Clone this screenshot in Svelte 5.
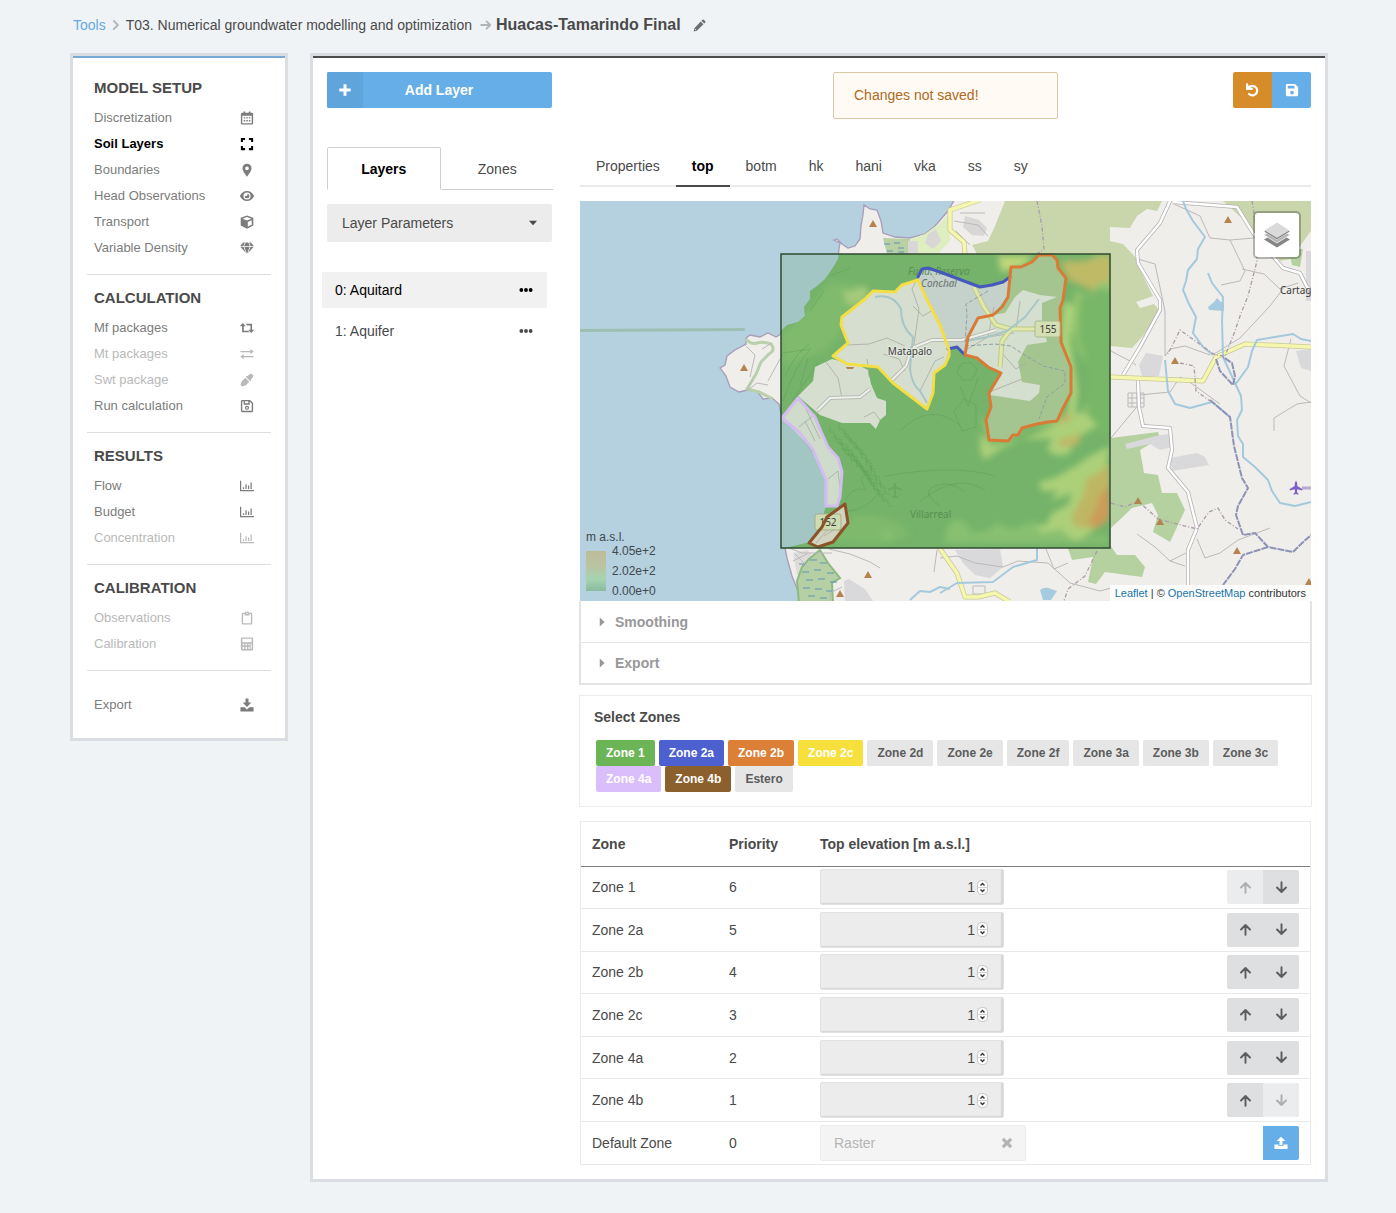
<script>
	const sections = [
		{
			title: 'MODEL SETUP',
			items: [
				{ label: 'Discretization', icon: 'calendar' },
				{ label: 'Soil Layers', icon: 'expand', active: true },
				{ label: 'Boundaries', icon: 'marker' },
				{ label: 'Head Observations', icon: 'eye' },
				{ label: 'Transport', icon: 'cube' },
				{ label: 'Variable Density', icon: 'gem' }
			]
		},
		{
			title: 'CALCULATION',
			items: [
				{ label: 'Mf packages', icon: 'retweet' },
				{ label: 'Mt packages', icon: 'exchange', disabled: true },
				{ label: 'Swt package', icon: 'dropper', disabled: true },
				{ label: 'Run calculation', icon: 'saveOutline' }
			]
		},
		{
			title: 'RESULTS',
			items: [
				{ label: 'Flow', icon: 'chart' },
				{ label: 'Budget', icon: 'chart' },
				{ label: 'Concentration', icon: 'chart', disabled: true }
			]
		},
		{
			title: 'CALIBRATION',
			items: [
				{ label: 'Observations', icon: 'clipboard', disabled: true },
				{ label: 'Calibration', icon: 'calculator', disabled: true }
			]
		},
		{ title: null, items: [{ label: 'Export', icon: 'download' }] }
	];

	const parameters = ['Properties', 'top', 'botm', 'hk', 'hani', 'vka', 'ss', 'sy'];
	const layers = ['0: Aquitard', '1: Aquifer'];

	const zones = [
		{ name: 'Zone 1', color: '#6cb557' },
		{ name: 'Zone 2a', color: '#4d60d0' },
		{ name: 'Zone 2b', color: '#dc8038' },
		{ name: 'Zone 2c', color: '#f7e03c' },
		{ name: 'Zone 2d' },
		{ name: 'Zone 2e' },
		{ name: 'Zone 2f' },
		{ name: 'Zone 3a' },
		{ name: 'Zone 3b' },
		{ name: 'Zone 3c' },
		{ name: 'Zone 4a', color: '#dabdfb' },
		{ name: 'Zone 4b', color: '#8b602c' },
		{ name: 'Estero' }
	];

	let rows = $state([
		{ zone: 'Zone 1', value: 1 },
		{ zone: 'Zone 2a', value: 1 },
		{ zone: 'Zone 2b', value: 1 },
		{ zone: 'Zone 2c', value: 1 },
		{ zone: 'Zone 4a', value: 1 },
		{ zone: 'Zone 4b', value: 1 }
	]);

	let activeParameter = $state('top');
	let activeLayer = $state(0);

	const move = (index, step) => {
		const next = [...rows];
		[next[index], next[index + step]] = [next[index + step], next[index]];
		rows = next;
	};

	// filled shapes, 16x16 grid
	const solid = {
		calendar: 'M4 .5h2V2h4V.5h2V2h1.500q1.500 0 1.500 1.500V14q0 1.500-1.500 1.500h-11Q1 15.500 1 14V3.500Q1 2 2.500 2H4zM2.600 5.500V14h10.800V5.500zM4.300 7H6v1.700H4.300zM7.200 7h1.700v1.700H7.200zM10.100 7h1.700v1.700h-1.700zM4.300 10.300H6V12H4.300zM7.200 10.300h1.700V12H7.200zM10.100 10.300h1.700V12h-1.700z',
		expand: 'M1 1h4.800v2.300H3.300v2.500H1zM10.200 1H15v4.800h-2.300V3.300h-2.500zM1 10.200h2.300v2.500h2.500V15H1zM12.700 10.200H15V15h-4.800v-2.300h2.500z',
		marker: 'M8 .8a5.2 5.2 0 0 1 5.2 5.2C13.2 9.200 8 15.600 8 15.600S2.800 9.200 2.800 6A5.200 5.200 0 0 1 8 .8zM8 4a2.100 2.100 0 1 0 0 4.200A2.100 2.100 0 0 0 8 4z',
		eye: 'M8 2.400c3.600 0 6.400 2.100 8.100 5.600-1.700 3.500-4.500 5.600-8.100 5.600S1.600 11.500-.1 8C1.600 4.500 4.400 2.400 8 2.400zM8 3.900a4.100 4.100 0 1 0 0 8.200 4.100 4.100 0 0 0 0-8.200zM8.300 5.300a2.700 2.700 0 1 1-2.900 2.500q1.600.7 2.600-.2t.3-2.300z',
		cube: 'M8 .5l7.200 2.700v8.800L8 15.600.8 12V3.200zM2.900 4.200L8 6.200l5.100-2L8 2.400zM8.900 7.900v5.300l4.500-2.200V6.100z',
		gem: 'M3.600 1.800h2L3.900 5.700H.2zM6.500 1.800h3l1.700 3.900H4.800zM10.400 1.800h2l3.400 3.900h-3.700zM.3 6.600h3.600l2.900 7zM4.900 6.600h6.200L8 14.800zM12.100 6.600h3.600l-6.500 7z',
		retweet: 'M3.200 2.300L6.600 6H4.300v5h5l1.800 1.900H2.400V6H-.2zM6.500 3h7.300v7h2.400l-3.400 3.600L9.400 10h2.500V5H8.400z',
		exchange: 'M.5 4.500h11.300V2.200L15.700 5.200 11.800 8.200V6H.5zM15.500 11.700H4.200V14L.3 11l3.900-3v2.200h11.300z',
		dropper: 'M10.500 1.800q2-2 3.800-.1t-.1 3.800L12.300 7.500l.6.700-1.200 1.200-5.100-5.100L7.800 3.100l.7.600zM6.100 5.400l4.500 4.500-4 4q-.6.6-1.500.6L2.600 15.500.5 13.400l1-2.500q0-.9.6-1.500z',
		saveOutline: 'M2.500 1h9L15 4.500v9q0 1.500-1.500 1.500h-11Q1 15 1 13.500v-11Q1 1 2.500 1zM2.600 2.600v10.800h10.800V5.200l-2.300-2.300v3.600H4.200V2.600zM5.800 2.600v2.300h3.700V2.600zM8 7.600a2.400 2.400 0 1 1 0 4.800 2.400 2.400 0 0 1 0-4.800zM8 9a1 1 0 1 0 0 2 1 1 0 0 0 0-2z',
		chart: 'M0 2h1.400v10.600H16V14H0zM3.300 9.300h1.400v2H3.300zM6.200 6h1.400v5.300H6.200zM9.100 7.300h1.400v4H9.100zM12 4h1.400v7.300H12z',
		clipboard: 'M5.500 2Q6 .6 8 .6T10.500 2H12.700q1.300 0 1.300 1.300v10.900q0 1.300-1.300 1.300H3.300Q2 15.500 2 14.200V3.300Q2 2 3.300 2zM3.500 3.500V14h9V3.500h-1.700V5H5.200V3.500zM8 1.700a.8.800 0 1 0 0 1.600.8.800 0 0 0 0-1.600z',
		calculator: 'M2.500 .5h11Q15 .5 15 2v12q0 1.500-1.500 1.500h-11Q1 15.500 1 14V2Q1 .5 2.500 .5zM2.700 2.100v4h10.600v-4zM3 7.600v1.800h1.800V7.600zM6.300 7.600v1.800h1.800V7.600zM9.600 7.600v1.800H11V7.600zM12.200 7.600v6h1.100v-6zM3 11v2.600h1.800V11zM6.300 11v2.600h1.800V11zM9.600 11v2.600H11V11z',
		download: 'M6.300 .5h3.400v4.700h3.300L8 10.200 3 5.200h3.300zM.5 10.500h4.800L8 13.200l2.700-2.700h4.800v4.800H.5z',
		upload: 'M6.300 10.500V5.800H3L8 .8l5 5H9.700v4.700zM.5 9.800h4.600v1.700h5.800V9.800h4.600v5H.5z',
		plus: 'M6.300 1.500h3.400v4.800h4.800v3.400H9.700v4.800H6.300V9.700H1.500V6.300h4.800z',
		save: 'M2.500 1h8.800L15 4.700v8.800q0 1.500-1.500 1.500h-11Q1 15 1 13.500v-11Q1 1 2.500 1zM3.200 3.200v3h7.600v-3zM8 8.800a2.100 2.100 0 1 0 0 4.200 2.100 2.100 0 0 0 0-4.200z',
		pencil: 'M9.500 3.100l3.400 3.400-8.100 8.100-4 .9.900-4zM10.400 2.200l1.300-1.300q.8-.8 1.600 0l1.800 1.800q.8.8 0 1.600l-1.300 1.300zM2.900 12l-.5 1.900 1.900-.5z',
		dots: 'M2.700 5.800a2.200 2.200 0 1 1 0 4.400 2.200 2.200 0 0 1 0-4.400zM8 5.800a2.200 2.200 0 1 1 0 4.400 2.200 2.200 0 0 1 0-4.400zM13.300 5.800a2.200 2.200 0 1 1 0 4.400 2.200 2.200 0 0 1 0-4.400z',
		times: 'M1 4l3-3 4 4 4-4 3 3-4 4 4 4-3 3-4-4-4 4-3-3 4-4z',
		caret: 'M5 2l6.500 6L5 14z',
		caretDown: 'M1.500 4.500h13L8 11.500z'
	};

	// outlined shapes, 16x16 grid
	const line = {
		angle: 'M5 2.500L10.500 8 5 13.500',
		arrowRight: 'M1.500 8h12M8.800 3.200L13.600 8l-4.800 4.800',
		arrowUp: 'M8 14.500V2.500M2.500 8L8 2.500 13.500 8',
		arrowDown: 'M8 1.500v12M2.500 8L8 13.500 13.500 8',
		undo: 'M2.300 1.500v4.800h5M3 5.800Q4.800 3 8 3a5.100 5.100 0 1 1-3.700 8.700'
	};

	const peaks = [[293, 23], [164, 167], [288, 374], [260, 393], [648, 19], [595, 160], [558, 300], [580, 321], [657, 350], [729, 381]];
	const coast = 'M376 -4L368 10 355 25 345 33 330 37 315 36 303 32 301 20 297 9 290 8 284 4 283 14 281 25 280 38 275 45 268 47 262 43 257 38 254 39 260 42 259 48 258 58 252 68 245 78 237 85 230 90 230 98 224 106 225 115 218 121 207 124 201 130 201 133 196 136 188 132 180 136 170 134 166 137 166 143 155 149 147 155 145 164 140 167 146 175 150 186 159 191 168 189 177 190 183 198 192 197 199 203 202 217 218 232 235 255 245 280 246 305 240 325 230 341 205 347 207 357 212 375 218 390 220 404H735V-4z';
	const marsh = [[219, 363], [230, 359], [240, 362], [222, 371], [234, 369], [247, 372], [226, 379], [238, 378], [250, 381], [223, 387], [235, 388], [246, 390], [228, 395], [240, 397]];
	const terraces = [[250, 226], [256, 233], [262, 238], [268, 244], [273, 251], [277, 258], [282, 266], [287, 273]];
</script>

{#snippet icon(name, size = 14)}
	<svg class="icon" width={size} height={size} viewBox="0 0 16 16" aria-hidden="true">
		{#if solid[name]}
			<path d={solid[name]} fill="currentColor" fill-rule="evenodd" />
		{:else}
			<path d={line[name]} fill="none" stroke="currentColor" stroke-width="2.4" stroke-linecap="round" stroke-linejoin="round" />
		{/if}
	</svg>
{/snippet}

<div class="page">
	<nav class="breadcrumb" aria-label="Breadcrumb">
		<a href="#tools">Tools</a>
		<span class="breadcrumb__divider">{@render icon('angle', 12)}</span>
		<span>T03. Numerical groundwater modelling and optimization</span>
		<span class="breadcrumb__divider breadcrumb__divider--arrow">{@render icon('arrowRight', 12)}</span>
		<h1>Huacas-Tamarindo Final</h1>
		<button class="breadcrumb__edit" aria-label="Edit title">{@render icon('pencil', 13)}</button>
	</nav>

	<div class="columns">
		<aside class="box">
			<div class="sidebar">
				{#each sections as section}
					<section class="sidebar__section">
						{#if section.title}
							<h2>{section.title}</h2>
						{/if}
						{#each section.items as item}
							<a class="sidebar__item" class:active={item.active} class:disabled={item.disabled} href="#nav">
								<span>{item.label}</span>
								{@render icon(item.icon)}
							</a>
						{/each}
					</section>
				{/each}
			</div>
		</aside>

		<main class="box">
			<div class="editor">
				<div class="layers">
					<button class="add-button">
						<span class="add-button__icon">{@render icon('plus')}</span>
						<span class="add-button__label">Add Layer</span>
					</button>

					<div class="tabs">
						<button class="tabs__item active">Layers</button>
						<button class="tabs__item">Zones</button>
					</div>

					<div class="dropdown">
						<select aria-label="Layer parameters">
							<option>Layer Parameters</option>
						</select>
						{@render icon('caretDown', 10)}
					</div>

					<ul class="layer-list">
						{#each layers as layer, index}
							<li class:active={index === activeLayer}>
								<button class="layer-list__name" onclick={() => (activeLayer = index)}>{layer}</button>
								<button class="layer-list__menu" aria-label="Actions for {layer}">{@render icon('dots')}</button>
							</li>
						{/each}
					</ul>
				</div>

				<div class="content">
					<div class="toolbar">
						<div class="message" role="status">Changes not saved!</div>
						<div class="toolbar__buttons">
							<button class="undo" aria-label="Undo">{@render icon('undo', 15)}</button>
							<button class="save" aria-label="Save">{@render icon('save')}</button>
						</div>
					</div>

					<div class="menu">
						{#each parameters as parameter}
							<button class:active={parameter === activeParameter} onclick={() => (activeParameter = parameter)}>{parameter}</button>
						{/each}
					</div>

					<div class="map">
						<svg class="map__canvas" viewBox="0 0 731 400" preserveAspectRatio="xMidYMid slice" role="img" aria-label="Model area">
							<defs>
								<clipPath id="land"><path d={coast} /></clipPath>
								<clipPath id="raster"><rect x="201" y="53" width="329" height="294" /></clipPath>
								<filter id="soft" x="-30%" y="-30%" width="160%" height="160%"><feGaussianBlur stdDeviation="3" /></filter>
							</defs>
							<rect width="731" height="400" fill="#b5d0de" />
							<path d="M0 129.500L165 128.500" stroke="#9cbfb2" stroke-width="3" />
							<path d={coast} fill="#f0eeea" stroke="#a79db8" stroke-width="1.300" />

							<!-- vegetation and built-up areas -->
							<path d="M425 0L415 25 408 40 392 44 397 53H530V145L552 147 563 135 580 110 574 103 560 107 556 101 573 95 563 75 557 58 543 43 530 40V26L550 27 557 15 567 8 577 10 582 0z" fill="#c9d5ab" />
							<path d="M643 0L665 20 675 35 690 45 700 60 712 58 720 45 731 30V0z" fill="#c9d5ab" />
							<path d="M303 37L330 38 328 53H307z" fill="#b9cfa4" />
							<path d="M330 38L345 33 360 22 370 12V40L358 53H338z" fill="#dfeec0" />
							<path d="M328 40h10v13h-10zM348 33l8-5 5 12-8 8-8-6zM385 15l14 4 8 8-3 8-12-1-9-8z" fill="#d8d7d6" />
							<path d="M531 237L578 231 580 237 560 249 564 272 578 274 582 292 597 292 605 309 590 341 573 331 578 314 572 302 552 307 531 327z" fill="#b5d1a0" />
							<path d="M488 347L530 344 537 354 555 354 565 366 562 376 525 371 516 383 508 381 513 356 492 359zM709 48h14l-3 18-8-2z" fill="#b5d1a0" />
							<path d="M375 349L420 348 423 366 410 377 395 374 383 362zM545 243L580 234 590 233 593 246 580 249 570 243 547 248zM590 257L617 252 625 256 629 264 592 270zM566 152l17 3-4 20h-17l-3-11zM716 150l15-2v22l-10-3zM726 50h5v50h-5zM264 380l5-2 16 10 8 12h-28z" fill="#d9d8da" />
							<path d="M213 352L228 349 235 360 228 372 217 374z" fill="#dedbdb" />
							<path d="M240 349L248 362 260 377 252 382 253 402H219L217 380 222 366 229 358z" fill="#b6d0a5" stroke="#8dba80" stroke-width="2" />
							{#each marsh as [x, y]}
								<path d="M{x} {y}h7" stroke="#5f95b5" />
							{/each}
							<path d="M304 43h6M314 42h6M318 47h6M307 50h6M318 51h6" stroke="#5f95b5" />
							<path d="M166 138q5 6 11 4t14 1q5 6-2 10l-8 8-5 12-6 10-3 5 12 3 14 7" fill="none" stroke="#b9d0ac" stroke-width="3" />
							<path d="M628 106l6-5 3-4 4 4 3 1v8l-15-1zM460 389q5-4 11-1l6 2-6 9h-8z" fill="#a6cbe0" />

							<!-- small roads -->
							<g fill="none" stroke="#bcb9bb">
								<path d="M594 3L620 15 630 37 650 39 665 70 660 80 641 84M650 39L674 37M662 68L684 73 700 88 718 82M703 88L690 105 660 137 634 153M558 58L575 63 585 110 585 155 590 148 605 145 630 154" />
								<path d="M559 194L590 191 600 176 611 182 640 203M531 150L550 160 556 164M711 138L704 165 720 195 731 202M694 230V217L717 203 731 201M560 202L545 220 531 237" />
								<path d="M557 333L575 346 590 360 610 350M617 338L625 357 640 352 658 339 690 327M605 365L590 360M360 357L377 355 395 362 423 366 438 360 468 362 490 382 520 390 531 387" />
								<path d="M249 348L270 353 290 361 300 367M354 371l3-22M466 348l8 20 14-6M250 400v-8l12-6M204 345l18 7 30 0" />
								<path d="M166 145l9 9-5 22M182 148l10-6M173 178l-6 12 10-8 11 2M200 158l-12 22M374 20l24 4 10 11M380 12h25M376 30l14 14" />
								<path d="M548 192h16v14h-16zM552 192v14M557 192v14M548 197h16M548 202h16M393 385h12v8h-12zM215 353l14 14M213 360l14-7" />
							</g>

							<!-- main roads -->
							<g fill="none" stroke-linejoin="round">
								<path stroke="#b3b0b3" stroke-width="4" d="M591 -2L580 22 557 49 558 62 580 99 580 109 560 146 543 174M593 1L657 6 673 32 703 67 720 72 727 86 732 90M558 179L559 206 563 225 590 227 592 249 588 267 608 291 617 327 608 349 608 384" />
								<path stroke="#fff" stroke-width="2.500" d="M591 -2L580 22 557 49 558 62 580 99 580 109 560 146 543 174M593 1L657 6 673 32 703 67 720 72 727 86 732 90M558 179L559 206 563 225 590 227 592 249 588 267 608 291 617 327 608 349 608 384" />
								<path stroke="#c8c995" stroke-width="5" d="M531 176L623 180 636 156 665 143 732 146M358 345L377 372 385 396 398 396 415 392 430 401M400 -1L370 9 370 29 384 41 385 53" />
								<path stroke="#f6f7ae" stroke-width="3.500" d="M531 176L623 180 636 156 665 143 732 146M358 345L377 372 385 396 398 396 415 392 430 401M400 -1L370 9 370 29 384 41 385 53" />
							</g>

							<!-- rivers -->
							<g fill="none" stroke="#a4c9dd" stroke-width="2" stroke-linejoin="round">
								<path d="M603 0L606 8 613 20 625 36 618 48 617 58 608 69 606 80 603 89 609 103 616 116 613 132 623 146 633 154M628 72L632 82 643 96 642 120 643 156 655 182 661 195 662 209 657 219 658 235 663 243 663 256 675 266 688 279 692 290 700 302 715 305 731 301" />
								<path d="M655 184L668 166 672 150 677 139 695 136 713 133 721 138 731 140M585 159L588 190 595 203 610 207 632 201 650 216M360 392L377 382 413 381 433 366 457 359 457 347M330 399L340 390 350 391 360 386 370 388" />
							</g>
							<path d="M636 158L640 170 653 184 655 175 652 162 643 156M630 199L650 216 654 245 662 277 668 287 658 305 656 314 663 334 675 332 688 346 713 351 720 344 731 334M688 346L663 354 655 368 643 384" fill="none" stroke="#8d93b5" stroke-width="2" stroke-dasharray="7 1" />
							<path d="M672 0L677 30 677 60 668 95 660 115 655 130 645 155 635 154 600 129 588 153M600 162L614 165 616 190 630 200M531 302L545 306 558 300 578 318 617 328 629 311 638 307 645 319 658 328M517 350L505 375 488 388 484 400M457 0L462 25 464 48 457 53" fill="none" stroke="#ab9aac" stroke-width="1.300" stroke-dasharray="4 2 1 2" />

							<!-- elevation raster -->
							<g clip-path="url(#raster)">
								<rect x="201" y="53" width="329" height="294" fill="#a2c6c4" />
								<g clip-path="url(#land)">
									<rect x="201" y="53" width="329" height="294" fill="#74b369" />
									<g filter="url(#soft)">
										<path d="M235 100L250 80 280 85 292 95 270 110 262 130 245 150 205 165 201 135z" fill="#80ba6d" />
										<path d="M262 90h14v-4h12v8l-8 10h-12z" fill="#a5ca79" />
										<path d="M415 53h120v38l-14-3-14 6-12-4-5 30 8 30 12 20-2 30-14 22-40 5-30 12-25-25 10 25 35-10 45-15-10 35 35-50V53H415l15 15z" fill="#95c570" />
										<path d="M500 96l32-6v145l-26-10 4-50-12-40z" fill="#78b767" />
										<path d="M480 60h22l30-7v26l-14 3-4 8-14-6-12-6z" fill="#bfba66" />
										<path d="M418 55h35l-10 10-22 6z" fill="#bfd67c" />
										<path d="M484 100l9 5-3 35 8 50-4 30-8 5 4-35-10-45z" fill="#afd47b" />
										<path d="M400 232l12 12 30-5 30-13 15-15 20 2 10 12-20 12-8 16-12 2-10-6 5-12-30 2-20 8-18 12-4-10z" fill="#abd079" />
										<path d="M477 240l25-8-4 12-18 2zM482 214l12-2-6 10-10 0z" fill="#c0b666" />
										<path d="M530 245l-20 10-16 11-18 10-18 6 4 8 16 0-8 10 22-8-4 12-16 8-6 12-22 0 5 8 35 0 12 10 21-15z" fill="#abd079" />
										<path d="M530 262l-12 10-12 6-2 14-12 22 2 12 22 2 14-12z" fill="#bfb663" />
										<path d="M530 284l-10 10-4 14-8 16 12 2 10-10z" fill="#cb9b59" />
										<path d="M255 325q20-15 42-10l22 6 12 14-30 8-45-2z" fill="#7fb96c" />
										<path d="M302 330h11v9h-11zM365 332l8-14 14 4 4 10 16-2 10-8 16 6 20-8 8 12 20-4 10 12 36-6v8H365z" fill="#88c071" />
									</g>
									<g fill="none" stroke="#5c9f57" stroke-opacity=".45">
										<path d="M203 200q12-35 26-50M205 175q10-22 24-32M212 200l26-38M220 185l8-28M203 152l28-4M230 110l14-20M250 75l20-8" />
										{#each terraces as [x, y], i}
											<path d="M{x} {y}v5h4v6h3v5h5v6h3v5h6v5h4" />
											<path d="M{x + 9} {y - 4 + i}v6h5v5h4v6h5" />
										{/each}
										<path d="M265 300q6-14 20-12l-4-10 12-14M300 290q-14 20-32 20M320 230q30-30 60-6M305 275q70-12 110 0M340 300q40-30 65-10" />
										<path d="M382 162h10l5 7-5 10h-10l-5-8zM380 185l8 20 10-28M374 210l10-12 12 6v22l-14 4zM360 305q-20-14-5-20t30 6" />
										<path d="M315 282v14M308 289l7-3 7 3M312 296h6" stroke-width="2" />
									</g>
								</g>
								<text class="map__label map__label--dim" x="330" y="317">Villarreal</text>
							</g>

							<!-- zones -->
							<path d="M252 158L235 166 233 180 218 195 240 214 262 222 290 222 296 228 300 219 306 214 306 200 297 197 291 183 288 169 280 165z" fill="#d6dfcf" />
							<path d="M338 74L342 68 348 67 360 71 400 86 423 81 430 76 428 96 413 114 398 117 388 136 385 154 377 146 368 147 360 124 347 99 338 79z" fill="#c5d2cb" />
							<path d="M385 154L388 136 398 117 413 114 428 96 431 66 441 66 452 61 459 53 472 54 477 59 478 67 486 77 483 99 480 107 481 141 491 166 491 192 477 220 457 223 442 227 438 234 428 240 409 239 406 219 411 206 409 192 421 172 408 166 397 157z" fill="#a4c58f" />
							<path d="M385 154L388 136 398 117 413 114 425 112 435 96 443 89 460 94 477 96 462 102 462 119 467 141 447 144 438 161 442 181 460 184 459 192 450 200 410 194 421 172 408 166 397 157z" fill="#d5dfcf" />
							<path d="M338 79L322 84 315 91 293 90 262 116 261 124 268 142 253 155 267 163 298 166 313 182 347 208 353 192 354 172 365 164 369 149 360 124 347 99z" fill="#d6dfcf" />
							<path d="M218 199L235 216 248 246 258 257 262 271 260 296 257 305 246 305 246 279 233 249 202 217z" fill="#d0dccb" />
							<path d="M265 303L268 322 253 341 238 346 229 342 242 326 247 316z" fill="#d3d4bf" />

							<g fill="none" stroke="#a9aaa2" stroke-opacity=".8">
								<path d="M267 144l22-1 18-6 18 8M333 150l6-42-7-20 4-8M333 105l10 10 10-6M325 170l-6-12-16-5M340 190l15-30 9-4M246 161l12 16 4 20M289 176l-2-18M219 226l20-16M225 220l10 20M226 208l14 30M236 342l14-16 12 4M244 335l16-10M248 278l10-8 2 18M300 219l-6-8-10 5" />
								<path d="M348 67q12 26 26 14M384 150l24-14 26-4M440 100l-4 30M412 190l30-12M420 150l16 18 10-6M388 140l20-4 6-30" />
							</g>
							<path d="M238 209l12-12 30-1 10-8M312 179l14-14 6-18 20-8 30 0 34-10" fill="none" stroke="#b9bcb3" stroke-width="4" />
							<path d="M238 209l12-12 30-1 10-8M312 179l14-14 6-18 20-8 30 0 34-10" fill="none" stroke="#eef0ec" stroke-width="2" />
							<path d="M394 86l10 20 12 18 15 4 25 0M431 128l-9 12-2 26" fill="none" stroke="#bcc98e" stroke-width="5" />
							<path d="M394 86l10 20 12 18 15 4 24 0M431 128l-9 12-2 26" fill="none" stroke="#e2e9a6" stroke-width="3" />
							<path d="M295 96q18-4 26 12 0 18 12 28-2 20-3 32 2 16 10 22l7 12M387 140l20-4 20-6 18-14 14-18" fill="none" stroke="#a7c6c6" stroke-width="2" />
							<path d="M385 145l30-2 16 2 12 8 20 12 22 5 0 12-18 14-8 22M408 90l-22 13 1 10-2 30" fill="none" stroke="#8c9fa2" stroke-dasharray="4 2" />
							<text class="map__label map__label--dim map__label--italic" x="328" y="74">Fund. Reserva</text>

							<g fill="none" stroke-width="3" stroke-linejoin="round" stroke-linecap="round">
								<path stroke="#4558bd" d="M338 76L342 68 348 67 360 71 400 86 412 84 423 81 430 76M385 154L377 146 368 148" />
								<path stroke="#f3de45" d="M338 79L322 84 315 91 293 90 285 98 262 116 261 124 268 142 253 155 267 163 298 166 313 182 347 208 353 192 354 172 365 164 369 155 369 149 360 124 347 99z" />
								<path stroke="#d97b37" d="M385 154L388 136 398 117 413 114 422 106 428 96 431 66 441 66 452 61 459 54 472 54 477 59 478 67 486 77 483 99 480 107 481 141 491 166 491 192 482 209 477 220 468 221 457 223 442 227 438 234 433 234 428 240 409 239 406 219 411 206 409 192 421 172 408 166 397 157z" />
								<path stroke="#d3bdf0" d="M218 197L235 216 240 228 248 246 258 257 262 271 260 296 257 305 246 305 246 279 233 249 220 232 202 217z" />
							</g>
							<rect x="235" y="313" width="26" height="16" rx="2" fill="#cfdbb0" stroke="#9fb28c" />
							<text class="map__label" x="248" y="325">152</text>
							<path d="M265 303L268 322 253 341 238 346 229 342 242 326 247 316z" fill="none" stroke="#8a5428" stroke-width="3" stroke-linejoin="round" />
							<rect x="455" y="120" width="25" height="16" rx="2" fill="#d5dfb4" stroke="#aabb90" />
							<text class="map__label" x="468" y="132">155</text>
							<text class="map__label map__label--halo" x="330" y="154">Matapalo</text>
							<text class="map__label map__label--italic" x="359" y="86">Conchal</text>
							<text class="map__label map__label--start" x="700" y="93">Cartag</text>

							<rect x="201" y="53" width="329" height="294" fill="none" stroke="#2f4a31" stroke-width="1.500" />
							{#each peaks as [x, y]}
								<path d="M{x} {y - 4}l4 7h-8z" fill="#b5834f" />
							{/each}
							<path d="M266 166h8l-1 2h-6z" fill="#b5834f" />
							<path d="M722 287h9" stroke="#b5a9cf" stroke-width="3" />
							<path d="M716 280q1.500 1 1.300 5l5 3v1.500l-5-1.300-.3 3 1.500 1.500v1l-2.500-.6-2.500.6v-1l1.500-1.500-.3-3-5 1.300V288l5-3q-.2-4 1.300-5z" fill="#7e5fc5" />
						</svg>

						<button class="map__layers" aria-label="Layers">
							<svg width="26" height="26" viewBox="0 0 26 26" aria-hidden="true">
								<path d="M13 10L26 17.500 13 25.500 0 17.500z" fill="#858585" />
								<path d="M13 5L26 13 13 21 0 13z" fill="#b4b4b4" stroke="#f4f4f4" stroke-width=".8" />
								<path d="M13 1.500L26 9.500 13 17.500 0 9.500z" fill="#6f6f6f" stroke="#f4f4f4" stroke-width=".6" />
								<path d="M13 .5L25.500 8.500 13 16 .5 8.500z" fill="#dadada" />
							</svg>
						</button>

						<div class="legend">
							<span>m a.s.l.</span>
							<div class="legend__scale">
								<div class="legend__bar"></div>
								<div class="legend__values">
									<span>4.05e+2</span>
									<span>2.02e+2</span>
									<span>0.00e+0</span>
								</div>
							</div>
						</div>

						<div class="attribution">
							<a href="#leaflet">Leaflet</a> | © <a href="#osm">OpenStreetMap</a> contributors
						</div>
					</div>

					<div class="accordion">
						<button>{@render icon('caret', 12)}<span>Smoothing</span></button>
						<button>{@render icon('caret', 12)}<span>Export</span></button>
					</div>

					<section class="zones">
						<h3>Select Zones</h3>
						<div class="zones__list">
							{#each zones as zone}
								<button class="zone" class:selected={zone.color} style:background={zone.color}>{zone.name}</button>
							{/each}
						</div>
					</section>

					<div class="table-box">
						<table>
							<thead>
								<tr>
									<th class="col-zone">Zone</th>
									<th class="col-priority">Priority</th>
									<th>Top elevation [m a.s.l.]</th>
									<th></th>
								</tr>
							</thead>
							<tbody>
								{#each rows as row, index (row.zone)}
									<tr>
										<td>{row.zone}</td>
										<td>{rows.length - index}</td>
										<td>
											<div class="number">
												<input type="number" aria-label="Top elevation of {row.zone}" bind:value={row.value} />
												<svg width="11" height="15" viewBox="0 0 11 15" aria-hidden="true">
													<rect x=".5" y=".5" width="10" height="14" rx="4" fill="#fff" stroke="#c6c6c6" />
													<path d="M0 7.500h11" stroke="#d2d2d2" />
													<path d="M3.500 5.500l2-2 2 2M3.500 9.500l2 2 2-2" fill="none" stroke="#333" stroke-width="1.400" />
												</svg>
											</div>
										</td>
										<td>
											<div class="order">
												<button aria-label="Move {row.zone} up" disabled={index === 0} onclick={() => move(index, -1)}>{@render icon('arrowUp', 13)}</button>
												<button aria-label="Move {row.zone} down" disabled={index === rows.length - 1} onclick={() => move(index, 1)}>{@render icon('arrowDown', 13)}</button>
											</div>
										</td>
									</tr>
								{/each}
								<tr>
									<td>Default Zone</td>
									<td>0</td>
									<td>
										<div class="raster">
											<input type="text" value="Raster" aria-label="Default zone source" disabled />
											{@render icon('times', 12)}
										</div>
									</td>
									<td>
										<div class="order">
											<button class="upload" aria-label="Upload raster">{@render icon('upload')}</button>
										</div>
									</td>
								</tr>
							</tbody>
						</table>
					</div>
				</div>
			</div>
		</main>
	</div>
</div>

<style>
	:global(body) {
		background: #eff3f6;
	}

	.page {
		padding: 10px 68px 32px 70px;
		font-family: 'Liberation Sans', Arial, sans-serif;
		font-size: 14px;
		line-height: 18px;
		color: #4a4a4a;
	}

	.page :is(*, *::before, *::after) {
		box-sizing: border-box;
	}

	button,
	input,
	select {
		margin: 0;
		padding: 0;
		border: 0;
		background: none;
		font: inherit;
		color: inherit;
	}

	a {
		text-decoration: none;
		color: inherit;
	}

	h1,
	h2,
	h3,
	ul {
		margin: 0;
		padding: 0;
	}

	.icon {
		display: block;
		flex: none;
	}

	.breadcrumb {
		display: flex;
		align-items: center;
		height: 30px;
		padding-left: 3px;
	}

	.breadcrumb a {
		color: #67a9dc;
	}

	.breadcrumb__divider {
		margin: 0 4px;
		color: #b0b4b7;
	}

	.breadcrumb__divider--arrow {
		margin-left: 8px;
	}

	h1 {
		font-size: 16px;
		line-height: 20px;
	}

	.breadcrumb__edit {
		margin-left: 12px;
		color: #6c6e70;
	}

	.columns {
		display: grid;
		grid-template-columns: 218px minmax(0, 1fr);
		align-items: start;
		gap: 22px;
		margin-top: 13px;
	}

	.box {
		border: 3px solid #dadde1;
		background: #fff;
	}

	.sidebar {
		padding: 7px 14px;
		border-top: 2px solid #78a8d4;
	}

	.sidebar__section {
		padding: 14px 17px 13px 7px;
		border-bottom: 1px solid #dedede;
	}

	.sidebar__section:last-child {
		padding-top: 21px;
		border-bottom: 0;
	}

	h2 {
		margin-bottom: 8px;
		font-size: 15px;
		line-height: 18px;
	}

	.sidebar__item {
		display: flex;
		align-items: center;
		justify-content: space-between;
		height: 26px;
		font-size: 13px;
		color: #7c7c7c;
	}

	.sidebar__item.active {
		font-weight: bold;
		color: #000;
	}

	.sidebar__item.disabled {
		color: #b9b9b9;
	}

	.editor {
		display: grid;
		grid-template-columns: 225px minmax(0, 1fr);
		gap: 28px;
		padding: 14px;
		border-top: 2px solid #4b4c4e;
	}

	.add-button {
		display: flex;
		align-items: center;
		width: 100%;
		height: 36px;
		border-radius: 2px;
		overflow: hidden;
		background: #65aee8;
		font-weight: bold;
		color: #fff;
	}

	.add-button__icon {
		display: grid;
		place-items: center;
		width: 36px;
		height: 100%;
		background: #5fa4da;
	}

	.add-button__label {
		flex: 1;
		padding-right: 37px;
	}

	.tabs {
		display: grid;
		grid-template-columns: 1fr 1fr;
		margin: 39px -2px 0 0;
	}

	.tabs__item {
		height: 43px;
		border: 1px solid transparent;
		border-bottom-color: #cfcfcf;
	}

	.tabs__item.active {
		border-color: #cfcfcf;
		border-bottom-color: transparent;
		border-radius: 2px 2px 0 0;
		font-weight: bold;
		color: #000;
	}

	.dropdown {
		display: flex;
		align-items: center;
		margin-top: 14px;
		padding-right: 14px;
		border-radius: 2px;
		background: #ececec;
	}

	.dropdown select {
		flex: 1;
		height: 38px;
		padding-left: 15px;
		appearance: none;
	}

	.layer-list {
		display: grid;
		gap: 5px;
		margin: 30px 5px 0 -5px;
		list-style: none;
	}

	.layer-list li {
		display: flex;
		align-items: center;
		justify-content: space-between;
		height: 36px;
		padding: 0 14px 0 13px;
	}

	.layer-list li.active {
		background: #f1f1f1;
		color: #000;
	}

	.toolbar {
		display: grid;
		grid-template-columns: 1fr 225px 1fr;
		align-items: start;
	}

	.message {
		grid-column: 2;
		padding: 14px 20px;
		border: 1px solid #dcc8a8;
		border-radius: 2px;
		background: #fffaf4;
		line-height: 17px;
		color: #ae6a22;
	}

	.toolbar__buttons {
		display: flex;
		justify-content: flex-end;
	}

	.toolbar__buttons button {
		display: grid;
		place-items: center;
		width: 39px;
		height: 36px;
		color: #fff;
	}

	.undo {
		border-radius: 2px 0 0 2px;
		background: #d68c28;
	}

	.save {
		border-radius: 0 2px 2px 0;
		background: #65aee8;
	}

	.menu {
		display: flex;
		margin-top: 28px;
		border-bottom: 2px solid #ebebeb;
	}

	.menu button {
		height: 40px;
		margin-bottom: -2px;
		padding: 0 16px;
		border-bottom: 2px solid transparent;
	}

	.menu button.active {
		border-bottom-color: #4a4a4a;
		font-weight: bold;
		color: #000;
	}

	.map {
		position: relative;
		height: 400px;
		margin-top: 14px;
		overflow: hidden;
	}

	.map__canvas {
		display: block;
		width: 100%;
		height: 100%;
	}

	.map__label {
		font-family: 'Noto Sans', sans-serif;
		font-size: 10px;
		text-anchor: middle;
		fill: #3c3c3c;
	}

	.map__label--start {
		text-anchor: start;
	}

	.map__label--italic {
		font-style: italic;
		fill: #6b7471;
	}

	.map__label--dim {
		text-anchor: start;
		fill: #5b8f55;
	}

	.map__label--halo {
		stroke: #e3e9df;
		stroke-width: 2px;
		paint-order: stroke;
	}

	.map__layers {
		position: absolute;
		top: 10px;
		right: 10px;
		display: grid;
		place-items: center;
		width: 48px;
		height: 48px;
		border: 2px solid rgba(0, 0, 0, 0.25);
		border-radius: 5px;
		background: #fff;
		background-clip: padding-box;
	}

	.legend {
		position: absolute;
		bottom: 0;
		left: 6px;
		font-size: 12px;
		line-height: 20px;
		color: #40494d;
	}

	.legend > span {
		display: block;
		margin-bottom: -6px;
	}

	.legend__scale {
		display: flex;
		gap: 6px;
	}

	.legend__bar {
		width: 20px;
		height: 40px;
		margin-top: 10px;
		background: linear-gradient(#bfbb98, #b8c5a3 40%, #a6d4b0 70%, #88bb9f);
	}

	.legend__values {
		display: grid;
	}

	.attribution {
		position: absolute;
		right: 0;
		bottom: 0;
		padding: 0 5px;
		background: rgba(255, 255, 255, 0.8);
		font-size: 11px;
		line-height: 16px;
		color: #333;
	}

	.attribution a {
		color: #2074ad;
	}

	.accordion {
		margin: 0 -1px;
		border: solid #e4e4e4;
		border-width: 0 2px 2px;
	}

	.accordion button {
		display: flex;
		align-items: center;
		gap: 7px;
		width: 100%;
		height: 41px;
		padding-left: 15px;
		font-weight: bold;
		color: #989898;
	}

	.accordion button + button {
		border-top: 1px solid #e6e6e6;
	}

	.zones {
		margin: 10px -1px 0;
		padding: 12px 14px 14px;
		border: 1px solid #ececec;
	}

	h3 {
		font-size: 14px;
		line-height: 18px;
	}

	.zones__list {
		display: flex;
		flex-wrap: wrap;
		column-gap: 4px;
		margin-top: 14px;
		padding-left: 2px;
	}

	.zone {
		height: 26px;
		padding: 0 10px;
		border-radius: 2px;
		background: #e6e6e6;
		font-size: 12px;
		font-weight: bold;
		color: #5c5c5c;
	}

	.zone.selected {
		color: #fff;
	}

	.table-box {
		margin-top: 14px;
		border: 1px solid #e9e9e9;
	}

	table {
		width: 100%;
		height: 342px;
		border-collapse: collapse;
	}

	th,
	td {
		padding: 0 11px;
		text-align: left;
	}

	th {
		height: 44px;
		border-bottom: 1px solid #7d7d7d;
	}

	td {
		height: 42px;
		border-top: 1px solid #e9e9e9;
	}

	.col-zone {
		width: 137px;
	}

	.col-priority {
		width: 91px;
	}

	.number,
	.raster {
		display: flex;
		align-items: center;
		height: 36px;
		border-radius: 2px;
	}

	.number {
		width: 184px;
		padding-right: 15px;
		border: 1px solid #e2e2e2;
		background: #ececec;
		box-shadow: inset -2px -1px 1px #d6d6d6;
	}

	.number input {
		flex: 1;
		min-width: 0;
		padding-right: 2px;
		text-align: right;
		appearance: textfield;
	}

	.number input::-webkit-inner-spin-button {
		appearance: none;
	}

	.raster {
		width: 206px;
		padding: 0 12px 0 13px;
		border: 1px solid #ececec;
		background: #f4f4f4;
		color: #b4b4b4;
	}

	.raster input {
		flex: 1;
		min-width: 0;
	}

	.order {
		display: flex;
		justify-content: flex-end;
	}

	.order button {
		display: grid;
		place-items: center;
		width: 36px;
		height: 34px;
		background: #dedfe1;
		color: #5e5e5e;
	}

	.order button:first-child {
		border-radius: 2px 0 0 2px;
	}

	.order button:last-child {
		border-radius: 0 2px 2px 0;
	}

	.order button:disabled {
		background: #ebecee;
		color: #aeaeae;
	}

	.order .upload {
		border-radius: 2px;
		background: #65aee8;
		color: #fff;
	}
</style>
